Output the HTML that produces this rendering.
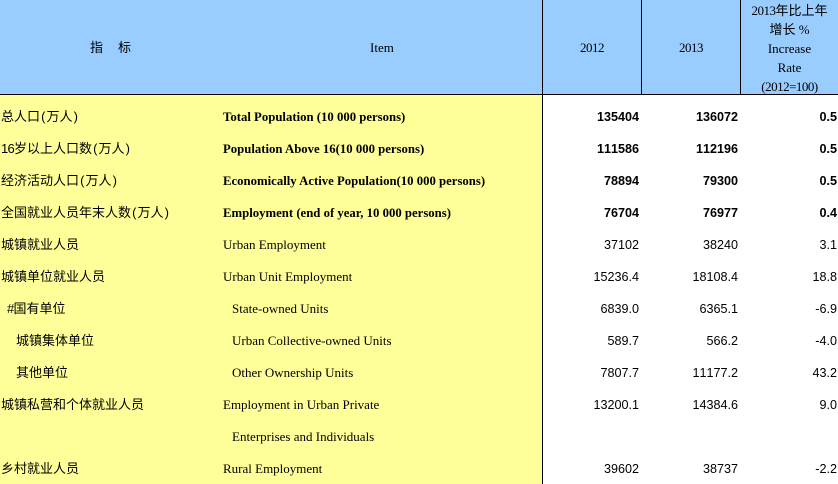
<!DOCTYPE html>
<html><head><meta charset="utf-8"><style>
html,body{margin:0;padding:0;background:#fff}
#p{position:relative;width:838px;height:484px;overflow:hidden;background:#fff;color:#000}
.a{position:absolute;white-space:pre}
.y{background:#ffff99;left:0;top:95px;width:542px;height:389px}
.b{background:#99ccff;left:0;top:0;width:838px;height:94px}
.l{background:#000}
.c{font:13px/18px "Liberation Sans","WenQuanYi Zen Hei","Noto Sans CJK SC",sans-serif;left:1px}
.c i{font-style:normal;display:inline-block;width:6.5px;text-align:center}
.e{font:13px/16px "Liberation Serif",serif;left:223px}
.e.x{font-size:12.75px}
.n{font:12.6px/16px "Liberation Sans",sans-serif;text-align:right;font-kerning:none}
.d{right:199px}.f{right:100px}.g{right:1px}
.x{font-weight:bold}
.h{font:13px/19px "Liberation Serif","WenQuanYi Zen Hei","Noto Sans CJK SC",serif;left:741px;width:97px;text-align:center}
.h b{font-weight:normal;letter-spacing:-.5px}
</style></head><body><div id="p">
<div class="a b"></div>
<div class="a y"></div>
<div class="a l" style="left:0;top:94px;width:838px;height:1px"></div>
<div class="a l" style="left:542px;top:0;width:1px;height:484px"></div>
<div class="a l" style="left:641px;top:0;width:1px;height:94px"></div>
<div class="a l" style="left:740px;top:0;width:1px;height:94px"></div>

<div class="a c" style="left:90px;top:39px">指</div>
<div class="a c" style="left:118px;top:39px">标</div>
<div class="a e" style="left:370px;top:40px">Item</div>
<div class="a e" style="left:580px;top:40px;letter-spacing:-.5px">2012</div>
<div class="a e" style="left:679px;top:40px;letter-spacing:-.5px">2013</div>
<div class="a h" style="top:1px"><b>2013</b>年比上年</div>
<div class="a h" style="top:20px">增长 %</div>
<div class="a h" style="top:39px">Increase</div>
<div class="a h" style="top:58px">Rate</div>
<div class="a h" style="top:77px"><b>(2012=100)</b></div>

<div class="a c" style="top:108px">总人口<i>(</i>万人<i>)</i></div>
<div class="a c" style="top:140px"><i>1</i><i>6</i>岁以上人口数<i>(</i>万人<i>)</i></div>
<div class="a c" style="top:172px">经济活动人口<i>(</i>万人<i>)</i></div>
<div class="a c" style="top:204px">全国就业人员年末人数<i>(</i>万人<i>)</i></div>
<div class="a c" style="top:236px">城镇就业人员</div>
<div class="a c" style="top:268px">城镇单位就业人员</div>
<div class="a c" style="top:300px;left:7px"><i>#</i>国有单位</div>
<div class="a c" style="top:332px;left:16px">城镇集体单位</div>
<div class="a c" style="top:364px;left:16px">其他单位</div>
<div class="a c" style="top:396px">城镇私营和个体就业人员</div>
<div class="a c" style="top:460px">乡村就业人员</div>

<div class="a e x" style="top:109px">Total Population (10 000 persons)</div>
<div class="a e x" style="top:141px">Population Above 16(10 000 persons)</div>
<div class="a e x" style="top:173px">Economically Active Population(10 000 persons)</div>
<div class="a e x" style="top:205px">Employment (end of year, 10 000 persons)</div>
<div class="a e" style="top:237px">Urban Employment</div>
<div class="a e" style="top:269px">Urban Unit Employment</div>
<div class="a e" style="top:301px;left:232px">State-owned Units</div>
<div class="a e" style="top:333px;left:232px">Urban Collective-owned Units</div>
<div class="a e" style="top:365px;left:232px">Other Ownership Units</div>
<div class="a e" style="top:397px">Employment in Urban Private</div>
<div class="a e" style="top:429px;left:232px">Enterprises and Individuals</div>
<div class="a e" style="top:461px">Rural Employment</div>

<div class="a n x d" style="top:109px">135404</div><div class="a n x f" style="top:109px">136072</div><div class="a n x g" style="top:109px">0.5</div>
<div class="a n x d" style="top:141px">111586</div><div class="a n x f" style="top:141px">112196</div><div class="a n x g" style="top:141px">0.5</div>
<div class="a n x d" style="top:173px">78894</div><div class="a n x f" style="top:173px">79300</div><div class="a n x g" style="top:173px">0.5</div>
<div class="a n x d" style="top:205px">76704</div><div class="a n x f" style="top:205px">76977</div><div class="a n x g" style="top:205px">0.4</div>
<div class="a n d" style="top:237px">37102</div><div class="a n f" style="top:237px">38240</div><div class="a n g" style="top:237px">3.1</div>
<div class="a n d" style="top:269px">15236.4</div><div class="a n f" style="top:269px">18108.4</div><div class="a n g" style="top:269px">18.8</div>
<div class="a n d" style="top:301px">6839.0</div><div class="a n f" style="top:301px">6365.1</div><div class="a n g" style="top:301px">-6.9</div>
<div class="a n d" style="top:333px">589.7</div><div class="a n f" style="top:333px">566.2</div><div class="a n g" style="top:333px">-4.0</div>
<div class="a n d" style="top:365px">7807.7</div><div class="a n f" style="top:365px">11177.2</div><div class="a n g" style="top:365px">43.2</div>
<div class="a n d" style="top:397px">13200.1</div><div class="a n f" style="top:397px">14384.6</div><div class="a n g" style="top:397px">9.0</div>
<div class="a n d" style="top:461px">39602</div><div class="a n f" style="top:461px">38737</div><div class="a n g" style="top:461px">-2.2</div>
</div></body></html>
